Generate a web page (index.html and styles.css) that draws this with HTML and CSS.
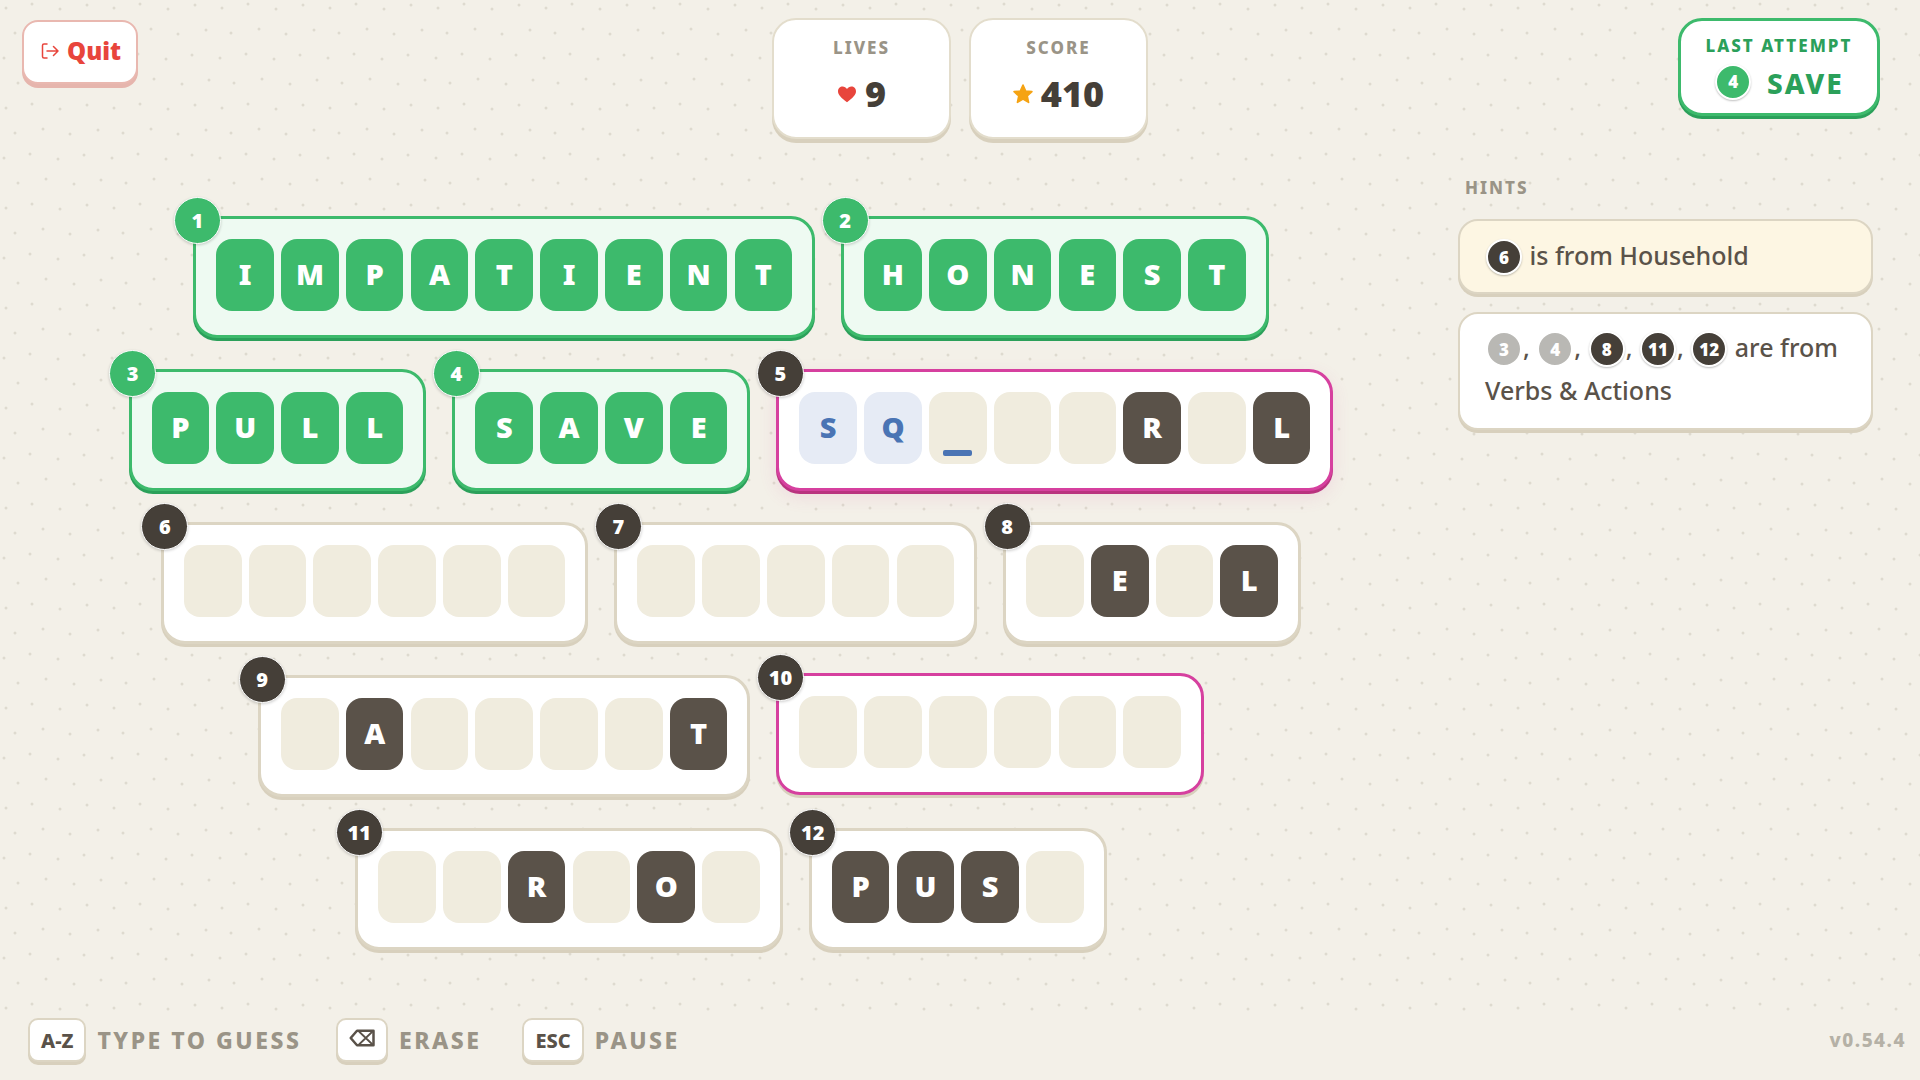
FILE: index.html
```html
<!DOCTYPE html>
<html lang="en">
<head>
  <meta charset="UTF-8">
  <meta name="viewport" content="width=device-width, initial-scale=1.0">
  <title>Word Puzzle</title>
  <link rel="stylesheet" href="styles.css">
</head>
<body>
  <div class="page">
    <header class="topbar">
      <div class="topbar-left">
        <button class="quit-button" type="button">
          <svg class="quit-icon" viewBox="0 0 18 18" width="18" height="18" fill="none" stroke="currentColor" stroke-width="1.5" stroke-linecap="round" stroke-linejoin="round">
            <path d="M6 2H3a1.500 1.500 0 0 0-1.500 1.500v11A1.500 1.500 0 0 0 3 16h3"/>
            <path d="M6 9h11M12.500 4.500 17 9l-4.500 4.500"/>
          </svg>
          Quit
        </button>
      </div>
      <div class="stats">
        <div class="stat-card">
          <div class="stat-label">LIVES</div>
          <div class="stat-value">
            <svg viewBox="0 0 20 18" width="20" height="18"><path fill="#e8453c" d="M10 17.200C4.500 13 1 10 1 6.200 1 3.500 3.100 1.500 5.600 1.500c1.800 0 3.400 1 4.400 2.600 1-1.600 2.600-2.600 4.400-2.600 2.500 0 4.600 2 4.600 4.700 0 3.800-3.500 6.800-9 11z"/></svg>
            9
          </div>
        </div>
        <div class="stat-card">
          <div class="stat-label">SCORE</div>
          <div class="stat-value">
            <svg viewBox="1 1 18 18" width="20" height="20"><path fill="#f5a313" stroke="#f5a313" stroke-width="1.500" stroke-linejoin="round" d="M10 2l2.400 5.300 5.600.600-4.200 3.900 1.200 5.700-5-2.900-5 2.900 1.200-5.700L2 7.900l5.600-.600z"/></svg>
            410
          </div>
        </div>
      </div>
      <div class="topbar-right">
        <div class="last-attempt">
          <div class="last-attempt-label">LAST ATTEMPT</div>
          <div class="last-attempt-word">
            <span class="chip chip-green">4</span>
            SAVE
          </div>
        </div>
      </div>
    </header>

    <main class="content">
      <section class="board">
        <div class="word-row">
          <div class="word word-solved">
            <span class="badge">1</span>
            <span class="tile tile-green">I</span><span class="tile tile-green">M</span><span class="tile tile-green">P</span><span class="tile tile-green">A</span><span class="tile tile-green">T</span><span class="tile tile-green">I</span><span class="tile tile-green">E</span><span class="tile tile-green">N</span><span class="tile tile-green">T</span>
          </div>
          <div class="word word-solved">
            <span class="badge">2</span>
            <span class="tile tile-green">H</span><span class="tile tile-green">O</span><span class="tile tile-green">N</span><span class="tile tile-green">E</span><span class="tile tile-green">S</span><span class="tile tile-green">T</span>
          </div>
        </div>
        <div class="word-row">
          <div class="word word-solved">
            <span class="badge">3</span>
            <span class="tile tile-green">P</span><span class="tile tile-green">U</span><span class="tile tile-green">L</span><span class="tile tile-green">L</span>
          </div>
          <div class="word word-solved">
            <span class="badge">4</span>
            <span class="tile tile-green">S</span><span class="tile tile-green">A</span><span class="tile tile-green">V</span><span class="tile tile-green">E</span>
          </div>
          <div class="word word-active">
            <span class="badge">5</span>
            <span class="tile tile-guess">S</span><span class="tile tile-guess">Q</span><span class="tile tile-cursor"></span><span class="tile"></span><span class="tile"></span><span class="tile tile-dark">R</span><span class="tile"></span><span class="tile tile-dark">L</span>
          </div>
        </div>
        <div class="word-row">
          <div class="word">
            <span class="badge">6</span>
            <span class="tile"></span><span class="tile"></span><span class="tile"></span><span class="tile"></span><span class="tile"></span><span class="tile"></span>
          </div>
          <div class="word">
            <span class="badge">7</span>
            <span class="tile"></span><span class="tile"></span><span class="tile"></span><span class="tile"></span><span class="tile"></span>
          </div>
          <div class="word">
            <span class="badge">8</span>
            <span class="tile"></span><span class="tile tile-dark">E</span><span class="tile"></span><span class="tile tile-dark">L</span>
          </div>
        </div>
        <div class="word-row">
          <div class="word">
            <span class="badge">9</span>
            <span class="tile"></span><span class="tile tile-dark">A</span><span class="tile"></span><span class="tile"></span><span class="tile"></span><span class="tile"></span><span class="tile tile-dark">T</span>
          </div>
          <div class="word word-linked">
            <span class="badge">10</span>
            <span class="tile"></span><span class="tile"></span><span class="tile"></span><span class="tile"></span><span class="tile"></span><span class="tile"></span>
          </div>
        </div>
        <div class="word-row">
          <div class="word">
            <span class="badge">11</span>
            <span class="tile"></span><span class="tile"></span><span class="tile tile-dark">R</span><span class="tile"></span><span class="tile tile-dark">O</span><span class="tile"></span>
          </div>
          <div class="word">
            <span class="badge">12</span>
            <span class="tile tile-dark">P</span><span class="tile tile-dark">U</span><span class="tile tile-dark">S</span><span class="tile"></span>
          </div>
        </div>
      </section>

      <aside class="hints">
        <h2 class="hints-title">HINTS</h2>
        <div class="hint-card hint-card-new">
          <span class="chip">6</span> is from Household
        </div>
        <div class="hint-card">
          <span class="chip chip-done">3</span>, <span class="chip chip-done">4</span>, <span class="chip">8</span>, <span class="chip">11</span>, <span class="chip">12</span> are from Verbs &amp; Actions
        </div>
      </aside>
    </main>

    <footer class="footer">
      <span class="key">A-Z</span><span class="key-label">TYPE TO GUESS</span>
      <span class="key key-erase">
        <svg viewBox="0 0 26 18" width="26" height="18" fill="none" stroke="currentColor" stroke-linejoin="round">
          <path stroke-width="2.500" d="M1.700 9 8 1.700h16.500v14.600H8z"/>
          <path stroke-width="1.800" d="M10 2.500l13.500 13M23.500 2.500 10 15.500"/>
        </svg>
      </span><span class="key-label key-label-wide">ERASE</span>
      <span class="key">ESC</span><span class="key-label">PAUSE</span>
      <span class="version">v0.54.4</span>
    </footer>
  </div>
</body>
</html>
```
FILE: styles.css
```css
:root {
  --bg: #f3f0e8;
  --line: #dcd5c3;
  --line-dark: #d8d0bd;
  --green: #3dba6c;
  --green-dark: #2ba05a;
  --pink: #d6409f;
  --pink-dark: #b9337f;
  --ink: #453f38;
  --ink-soft: #5a5249;
  --muted: #9a9487;
  --tile-w: 57.6px;
  --tile-gap: 7.2px;
}
* {
  box-sizing: border-box;
}
body {
  margin: 0;
  font-family: "Noto Sans", "Open Sans", sans-serif;
  color: var(--ink);
  background-color: var(--bg);
  background-image: url("data:image/svg+xml,%3Csvg xmlns='http://www.w3.org/2000/svg' width='108' height='100' fill='%23dedacf'%3E%3Ccircle cx='6' cy='8' r='1.500'/%3E%3Ccircle cx='32' cy='4' r='1.500'/%3E%3Ccircle cx='60' cy='9' r='1.500'/%3E%3Ccircle cx='87' cy='5' r='1.500'/%3E%3Ccircle cx='15' cy='33' r='1.500'/%3E%3Ccircle cx='43' cy='29' r='1.500'/%3E%3Ccircle cx='70' cy='34' r='1.500'/%3E%3Ccircle cx='98' cy='30' r='1.500'/%3E%3Ccircle cx='4' cy='58' r='1.500'/%3E%3Ccircle cx='30' cy='54' r='1.500'/%3E%3Ccircle cx='58' cy='59' r='1.500'/%3E%3Ccircle cx='84' cy='55' r='1.500'/%3E%3Ccircle cx='18' cy='83' r='1.500'/%3E%3Ccircle cx='46' cy='79' r='1.500'/%3E%3Ccircle cx='74' cy='84' r='1.500'/%3E%3Ccircle cx='101' cy='80' r='1.500'/%3E%3C/svg%3E");
}
.page {
  height: 100vh;
  display: flex;
  flex-direction: column;
  overflow: hidden;
}

/* top bar */
.topbar {
  display: grid;
  grid-template-columns: 1fr auto 1fr;
  height: 141px;
  padding: 18px 40px 0;
}
.topbar-left {
  margin-left: -18px;
}
.topbar-right {
  display: flex;
  justify-content: flex-end;
  align-items: flex-start;
}
.quit-button {
  display: flex;
  align-items: center;
  gap: 8px;
  width: 116px;
  height: 64px;
  margin-top: 2px;
  padding: 0 0 3px 17px;
  font-family: inherit;
  font-size: 24px;
  font-weight: 900;
  color: #e8453c;
  background-color: white;
  border: 2px solid #e9b8b0;
  border-radius: 16px;
  box-shadow: 0 4px 0 #e6b5ad;
}
.stats {
  display: flex;
  gap: 18px;
}
.stat-card {
  width: 179px;
  height: 121px;
  padding-top: 15px;
  text-align: center;
  background-color: white;
  border: 2px solid #e3ddcc;
  border-radius: 24px;
  box-shadow: 0 4px 0 var(--line-dark);
}
.stat-label {
  font-size: 17px;
  line-height: 26px;
  font-weight: 800;
  letter-spacing: 2px;
  color: var(--muted);
}
.stat-value {
  display: flex;
  align-items: center;
  justify-content: center;
  gap: 8px;
  margin-top: 8px;
  font-size: 36px;
  line-height: 50px;
  font-weight: 900;
}
.last-attempt {
  width: 202px;
  height: 98px;
  padding-top: 11px;
  text-align: center;
  background-color: white;
  border: 3px solid var(--green);
  border-radius: 24px;
  box-shadow: 0 3px 0 var(--green-dark);
}
.last-attempt-label {
  font-size: 17px;
  line-height: 28px;
  font-weight: 800;
  letter-spacing: 2px;
  color: var(--green-dark);
}
.last-attempt-word {
  display: flex;
  align-items: center;
  justify-content: center;
  gap: 15px;
  margin-top: 5px;
  font-size: 28px;
  line-height: 36px;
  font-weight: 800;
  letter-spacing: 2px;
  color: var(--green-dark);
}

/* board */
.content {
  flex: 1;
  display: flex;
  min-height: 0;
}
.board {
  width: 1462px;
  padding-top: 75px;
  display: flex;
  flex-direction: column;
  gap: 31px;
}
.word-row {
  display: flex;
  justify-content: center;
  gap: 26px;
}
.word {
  position: relative;
  display: flex;
  gap: var(--tile-gap);
  height: 122px;
  padding: 20px 20px 24px;
  background-color: white;
  border: 3px solid var(--line);
  border-radius: 24px;
  box-shadow: 0 3px 0 var(--line-dark);
}
.word-solved {
  background-color: #eefaf2;
  border-color: var(--green);
  box-shadow: 0 3px 0 var(--green-dark);
}
.word-active {
  border-color: var(--pink);
  box-shadow: 0 3px 0 var(--pink-dark), 0 6px 18px rgba(214, 64, 159, 0.12);
}
.word-linked {
  border-color: var(--pink);
  box-shadow: 0 3px 0 var(--line-dark);
  transform: translateY(-2px);
}
.badge {
  position: absolute;
  left: -22.5px;
  top: -22.5px;
  width: 47px;
  height: 47px;
  display: flex;
  align-items: center;
  justify-content: center;
  font-size: 20px;
  font-weight: 900;
  color: white;
  background-color: var(--ink);
  border: 1.5px solid white;
  border-radius: 50%;
  box-shadow: 0 1px 3px rgba(0, 0, 0, 0.2);
}
.word-solved .badge {
  background-color: var(--green);
}
.tile {
  position: relative;
  width: var(--tile-w);
  height: 72px;
  display: flex;
  align-items: center;
  justify-content: center;
  padding-bottom: 4px;
  font-size: 29px;
  font-weight: 900;
  color: white;
  background-color: #f0ecde;
  border-radius: 16px;
}
.tile-green {
  background-color: var(--green);
}
.tile-dark {
  background-color: var(--ink-soft);
}
.tile-guess {
  color: #4a74b4;
  background-color: #e6ebf5;
}
.tile-cursor::after {
  content: "";
  position: absolute;
  left: 14px;
  bottom: 8px;
  width: 29px;
  height: 6px;
  background-color: #4a74b4;
  border-radius: 2px;
}

/* hints */
.hints {
  width: 415px;
  margin-left: -4px;
  padding-top: 36px;
}
.hints-title {
  margin: 0 0 20px 7px;
  font-size: 17px;
  line-height: 22px;
  font-weight: 800;
  letter-spacing: 2px;
  color: var(--muted);
}
.hint-card {
  margin-bottom: 18px;
  padding: 12px 25px 16px;
  font-size: 25px;
  line-height: 43px;
  font-weight: 500;
  color: var(--ink-soft);
  background-color: white;
  border: 2px solid var(--line);
  border-radius: 20px;
  box-shadow: 0 3px 0 var(--line-dark);
}
.hint-card-new {
  padding: 13px 25px 15px;
  background-color: #fdf6e3;
}
.chip {
  display: inline-flex;
  align-items: center;
  justify-content: center;
  width: 36px;
  height: 36px;
  margin: -5px 1px -3px;
  vertical-align: middle;
  font-size: 17px;
  font-weight: 900;
  letter-spacing: 0;
  color: white;
  background-color: var(--ink);
  border: 2px solid white;
  border-radius: 50%;
  box-shadow: 0 1px 2px rgba(0, 0, 0, 0.25);
}
.chip-green {
  background-color: var(--green);
}
.chip-done {
  background-color: #b9b8b4;
  box-shadow: none;
}

/* footer */
.footer {
  display: flex;
  align-items: center;
  height: 62px;
  padding: 0 14px 18px 28px;
  background-color: var(--bg);
}
.key {
  display: flex;
  align-items: center;
  justify-content: center;
  min-width: 58px;
  height: 44px;
  padding: 0 11px;
  font-size: 20px;
  font-weight: 800;
  color: var(--ink-soft);
  background-color: white;
  border: 2px solid var(--line);
  border-radius: 10px;
  box-shadow: 0 3px 0 var(--line-dark);
}
.key-erase {
  min-width: 52px;
  padding: 0 0 4px;
}
.key-label {
  margin: 0 34.5px 0 11px;
  font-size: 23px;
  font-weight: 800;
  letter-spacing: 2.5px;
  color: var(--muted);
}
.key-label-wide {
  margin-right: 41px;
}
.version {
  margin-left: auto;
  font-size: 19px;
  font-weight: 800;
  letter-spacing: 1.5px;
  color: #b5b1a6;
}
```
